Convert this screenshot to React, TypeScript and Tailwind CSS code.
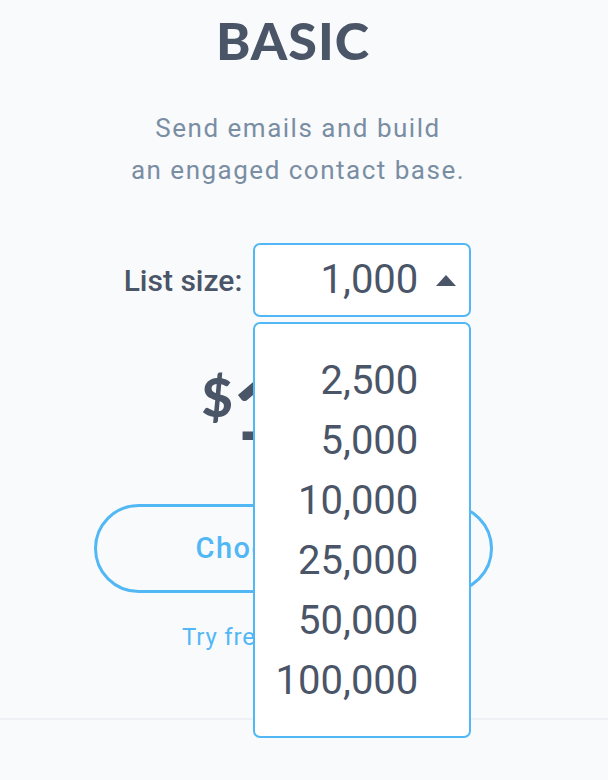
import React from 'react';

const sizes = ['2,500', '5,000', '10,000', '25,000', '50,000', '100,000'];

function ListSizeSelect() {
  return (
    <div className="relative w-[218px]">
      <div className="flex h-[74px] items-center justify-end rounded-[7px] border-2 border-[#52b8f5] bg-white pr-[13px]">
        <span className="text-[40px] leading-none text-[#4a5568]">1,000</span>
        <svg className="ml-[18px]" width="20" height="11" viewBox="0 0 20 11">
          <path d="M10 0 L20 11 L0 11 Z" fill="#4a5568" />
        </svg>
      </div>
      <ul className="absolute left-0 top-[79px] z-10 w-[218px] rounded-[7px] border-2 border-[#52b8f5] bg-white pb-[25px] pr-[51px] pt-[27px] text-right">
        {sizes.map((s) => (
          <li key={s} className="h-[60px] text-[40px] leading-[60px] text-[#4a5568]">
            {s}
          </li>
        ))}
      </ul>
    </div>
  );
}

export default function App() {
  return (
    <div className="min-h-[780px] w-[608px] bg-[#f9fafc] font-['Roboto',sans-serif]">
      <div className="flex flex-col items-center pr-[22px] pt-[14px]">
        <h1 className="font-['Lato',sans-serif] text-[52px] font-black leading-[52px] tracking-[1px] text-[#4a5568]">
          BASIC
        </h1>
        <p className="ml-[10px] mt-[41px] text-center text-[26px] leading-[42px] tracking-[1.5px] text-[#7a8ea3]">
          Send emails and build
          <br />
          an engaged contact base.
        </p>

        <div className="ml-[9px] mt-[52px] flex items-center gap-[11px]">
          <span className="text-[30px] font-medium text-[#4a5568]">List size:</span>
          <ListSizeSelect />
        </div>

        <div className="mt-[49px] flex items-start font-['Lato',sans-serif] text-[#4a5568]">
          <span className="mt-[4px] text-[54px] font-black leading-none">$</span>
          <span className="text-[84px] font-black leading-[84px]">10</span>
          <span className="ml-[6px] mt-[44px] text-[26px] font-bold leading-none">/mo</span>
        </div>

        <button className="mt-[54px] h-[89px] w-[399px] rounded-full border-[3px] border-[#52b8f5] text-[29px] font-medium tracking-[1.5px] text-[#52b8f5]">
          Choose Basic
        </button>

        <a className="mt-[28px] text-[24px] leading-[32px] tracking-[0.8px] text-[#52b8f5]">Try free for 30 days</a>
      </div>
      <div className="mt-[65px] border-t-2 border-[#eef0f6]" />
    </div>
  );
}
